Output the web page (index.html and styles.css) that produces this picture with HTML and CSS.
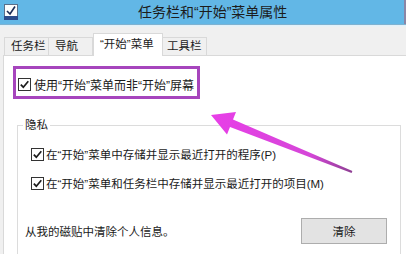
FILE: index.html
```html
<!DOCTYPE html>
<html lang="zh-CN">
<head>
<meta charset="utf-8">
<link rel="stylesheet" href="styles.css">
</head>
<body>
<div class="window">
  <div class="titlebar">
    <svg class="app-icon" width="14" height="16" viewBox="0 0 14 16">
      <rect x="0.5" y="0.5" width="13" height="12" fill="#fdfdfd" stroke="#5a6f8a"/>
      <path d="M3 7 L6 10 L11 2.5" fill="none" stroke="#1b2c55" stroke-width="1.6"/>
      <rect x="0" y="12" width="14" height="4" fill="#2b4d8c"/>
    </svg>
    <div class="title">任务栏和“开始”菜单属性</div>
    <div class="edge"></div>
  </div>
  <div class="tabs">
    <div class="tab t1">任务栏</div>
    <div class="tab t2">导航</div>
    <div class="tab active">“开始”菜单</div>
    <div class="tab t4">工具栏</div>
  </div>
  <div class="panel">
    <div class="highlight">
      <span class="cb"><svg width="11" height="11" viewBox="0 0 11 11"><path d="M1.8 5.6 L4.3 8.2 L9.3 2.2" fill="none" stroke="#1c1c1c" stroke-width="1.7"/></svg></span>
      <span class="label">使用“开始”菜单而非“开始”屏幕</span>
    </div>
    <fieldset class="group">
      <legend>隐私</legend>
      <div class="row first">
        <span class="cb"><svg width="11" height="11" viewBox="0 0 11 11"><path d="M1.8 5.6 L4.3 8.2 L9.3 2.2" fill="none" stroke="#1c1c1c" stroke-width="1.7"/></svg></span>
        <span class="label">在“开始”菜单中存储并显示最近打开的程序(P)</span>
      </div>
      <div class="row">
        <span class="cb"><svg width="11" height="11" viewBox="0 0 11 11"><path d="M1.8 5.6 L4.3 8.2 L9.3 2.2" fill="none" stroke="#1c1c1c" stroke-width="1.7"/></svg></span>
        <span class="label">在“开始”菜单和任务栏中存储并显示最近打开的项目(M)</span>
      </div>
      <div class="clear-row">
        <span class="label">从我的磁贴中清除个人信息。</span>
        <button class="btn">清除</button>
      </div>
    </fieldset>
  </div>
  <svg class="arrow" width="406" height="254" viewBox="0 0 406 254">
    <defs>
      <linearGradient id="ag" x1="211" y1="115" x2="352" y2="172" gradientUnits="userSpaceOnUse">
        <stop offset="0" stop-color="#e83fe8"/>
        <stop offset="0.7" stop-color="#d546d8"/>
        <stop offset="1" stop-color="#8e3f93"/>
      </linearGradient>
    </defs>
    <polygon points="211,115 236,112 233,119.5 352.4,171.1 351.6,172.9 230,127 227,134.5" fill="url(#ag)"/>
  </svg>
</div>
</body>
</html>
```

FILE: styles.css
```css
html, body {
  margin: 0;
  padding: 0;
}
body {
  width: 406px;
  height: 254px;
  overflow: hidden;
  background: #f0f0f0;
  font-family: "Liberation Sans", "Noto Sans CJK SC", sans-serif;
  color: #1a1a1a;
}
.window {
  position: relative;
  width: 406px;
  height: 254px;
  overflow: hidden;
  display: flex;
  flex-direction: column;
}
.titlebar {
  height: 24px;
  flex: none;
  background: #62b7e6;
  border-bottom: 1px solid #7eb2d1;
  box-shadow: 0 1px 0 #e2f1f9, 0 2px 0 #e9f2f6;
  display: flex;
  align-items: center;
}
.app-icon {
  margin-left: 4px;
  flex: none;
}
.title {
  margin-left: 120px;
  font-size: 14px;
  line-height: 24px;
  color: #1c1c1c;
  flex: 1;
  white-space: nowrap;
}
.edge {
  width: 2px;
  height: 24px;
  background: #8a86a6;
  flex: none;
}
.tabs {
  display: flex;
  align-items: flex-end;
  height: 30px;
  padding-left: 4px;
  flex: none;
  position: relative;
  z-index: 1;
}
.tab {
  box-sizing: border-box;
  height: 18px;
  border: 1px solid #d9d9d9;
  border-bottom: none;
  background: #f0f0f0;
  font-size: 11.5px;
  line-height: 17px;
  padding-left: 6px;
  white-space: nowrap;
}
.t1 { width: 45px; }
.t2 { width: 44px; border-left: none; }
.t4 { width: 44px; border-left: none; padding-left: 4px; }
.tab.active {
  width: 70px;
  height: 23px;
  margin-bottom: -1px;
  line-height: 21px;
  background: #ffffff;
  padding-left: 6px;
}
.panel {
  flex: 1;
  margin-left: 3px;
  margin-right: -10px;
  background: #ffffff;
  border: 1px solid #d9d9d9;
  border-bottom: none;
  padding-top: 10px;
  padding-left: 9px;
  position: relative;
}
.highlight {
  box-sizing: border-box;
  width: 187px;
  height: 33px;
  border: 3px solid #a645bd;
  display: flex;
  align-items: center;
  padding-left: 2px;
  padding-top: 4px;
}
.cb {
  box-sizing: border-box;
  width: 13px;
  height: 13px;
  border: 1px solid #333333;
  background: #ffffff;
  display: flex;
  align-items: center;
  justify-content: center;
  flex: none;
}
.label {
  font-size: 11.5px;
  white-space: nowrap;
}
.highlight .label {
  margin-left: 3px;
  font-size: 12px;
}
.group {
  margin: 19px 0 0 4px;
  width: 384px;
  padding: 0 0 0 7px;
  border: 1px solid #dcdcdc;
  border-bottom: none;
  height: 200px;
  box-sizing: border-box;
}
.group legend {
  padding: 0 2px;
  margin-left: -2px;
  font-size: 11.5px;
  line-height: 14px;
}
.row {
  display: flex;
  align-items: center;
  margin-left: 6px;
  height: 16px;
  margin-top: 13px;
}
.row.first {
  margin-top: 14px;
}
.row .label {
  margin-left: 2px;
}
.clear-row {
  display: flex;
  align-items: center;
  justify-content: space-between;
  margin-top: 27px;
  padding-right: 13px;
}
.btn {
  box-sizing: border-box;
  width: 86px;
  height: 26px;
  background: #e3e3e3;
  border: 1px solid #adadad;
  font-family: "Liberation Sans", "Noto Sans CJK SC", sans-serif;
  font-size: 11.5px;
  color: #1a1a1a;
  padding: 0;
}
.arrow {
  position: absolute;
  left: 0;
  top: 0;
  pointer-events: none;
  z-index: 5;
}
```
